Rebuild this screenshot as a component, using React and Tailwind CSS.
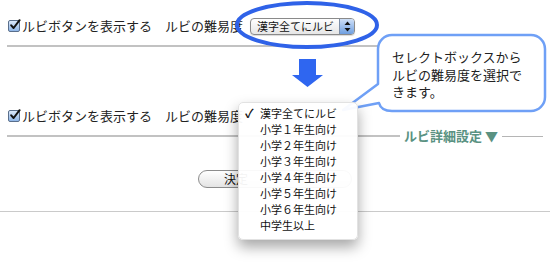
import React from 'react';

// opciones del menu de dificultad de ruby
const opciones = [
  '漢字全てにルビ',
  '小学１年生向け',
  '小学２年生向け',
  '小学３年生向け',
  '小学４年生向け',
  '小学５年生向け',
  '小学６年生向け',
  '中学生以上',
];

const fuente = { fontFamily: '"Noto Sans CJK JP", "Noto Sans", sans-serif' };

function Check() {
  return (
    <span className="relative inline-block w-[12px] h-[12px] rounded-[2px] border border-[#5a6f8c] bg-gradient-to-b from-[#dbe9fb] to-[#8fb6e8] shrink-0">
      <svg viewBox="0 0 12 12" className="absolute -top-[2px] left-0 w-[12px] h-[12px]">
        <path d="M2.2 6.3 L4.6 9 L10.6 1.2" fill="none" stroke="#111" strokeWidth="2" strokeLinecap="round" strokeLinejoin="round" />
      </svg>
    </span>
  );
}

function Select() {
  return (
    <div className="ml-[7px] flex items-stretch h-[17px] w-[105px] rounded-[4px] border border-[#8a8a8a] bg-gradient-to-b from-white to-[#e6e6e6] overflow-hidden shadow-[0_1px_1px_rgba(0,0,0,0.15)]">
      <span className="flex-1 min-w-0 pl-[6px] text-[11px] leading-[15px] text-[#111] whitespace-nowrap overflow-hidden">漢字全てにルビ</span>
      <span className="w-[15px] shrink-0 flex items-center justify-center border-l border-[#7d8fa8] bg-gradient-to-b from-[#cfe0f7] to-[#6f9fe0]">
        {/* flechitas del stepper */}
        <svg width="7" height="11" viewBox="0 0 7 11">
          <path d="M3.5 0.5 L6.5 4 H0.5 Z" fill="#111" />
          <path d="M3.5 10.5 L6.5 7 H0.5 Z" fill="#111" />
        </svg>
      </span>
    </div>
  );
}

function Fila({ conSelect }) {
  return (
    <div className="flex items-center h-[20px] pl-[1px] text-[13px] text-[#222]">
      <Check />
      <span className="ml-[2px]">ルビボタンを表示する</span>
      <span className="ml-[13px]">ルビの難易度</span>
      {conSelect && <Select />}
    </div>
  );
}

export default function App() {
  return (
    <div className="relative w-[550px] h-[263px] bg-white overflow-hidden" style={fuente}>
      <div className="px-[7px] pt-[16px]">
        <Fila conSelect />
        <div className="mt-[9px] h-[2px] bg-[#c2c2c2]" />

        {/* la segunda fila tiene el menu abierto encima, el select queda tapado */}
        <div className="mt-[59px]">
          <Fila />
        </div>

        {/* linea con la leyenda de detalle */}
        <div className="mt-[1px] h-[18px] flex items-center">
          <div className="flex-1 h-[2px] bg-[#c2c2c2]" />
          <span className="px-[4px] text-[13px] font-bold text-[#5a9282] leading-[18px]">ルビ詳細設定 ▼</span>
          <div className="w-[41px] h-[1px] bg-[#b5b5b5]" />
        </div>

        <div className="mt-[25px] flex">
          <button className="ml-[191px] w-[154px] h-[18px] rounded-full border border-[#8c8c8c] bg-gradient-to-b from-white to-[#e4e4e4] text-left pl-[25px] text-[12px] leading-[16px] text-[#111]">
            決定
          </button>
        </div>
      </div>

      <div className="mt-[23px] h-px bg-[#cacaca]" />

      {/* anotaciones: elipse, flecha y globo */}
      <svg className="absolute inset-0 pointer-events-none" width="550" height="263">
        <ellipse cx="307" cy="25" rx="70" ry="22" fill="none" stroke="#2f62e8" strokeWidth="4" />
        <path d="M299 59 H316 V75 H323 L307.5 87 L292 75 H299 Z" fill="#2f66f0" />
        <path
          d="M392 35 H531 A14 14 0 0 1 545 49 V97 A14 14 0 0 1 531 111 H392 Q381 111 379 103 L343 110 L378 84 V49 A14 14 0 0 1 392 35 Z"
          fill="white"
          stroke="#6fa0f6"
          strokeWidth="2.5"
          strokeLinejoin="round"
        />
      </svg>
      <div className="absolute left-[392px] top-[48px] text-[13px] leading-[17.5px] text-[#222]">
        <div>セレクトボックスから</div>
        <div>ルビの難易度を選択で</div>
        <div>きます。</div>
      </div>

      {/* menu desplegado */}
      <div className="absolute left-[238px] top-[102px] w-[120px] pt-[2px] pb-[6px] rounded-[5px] bg-white/95 border border-[#e2e2e2] shadow-[0_7px_14px_rgba(0,0,0,0.35)]">
        {opciones.map((op, i) => (
          <div key={op} className="relative h-[16px] pl-[21px] text-[11px] leading-[16px] text-[#111]">
            {i === 0 && <span className="absolute left-[6px] top-0 font-bold text-[12px]">✓</span>}
            {op}
          </div>
        ))}
      </div>
    </div>
  );
}
